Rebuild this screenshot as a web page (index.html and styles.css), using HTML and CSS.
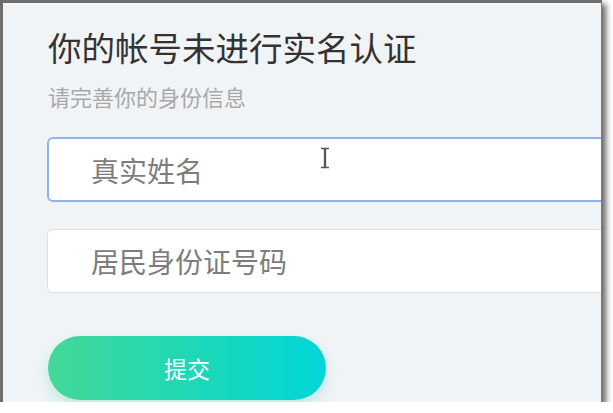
FILE: index.html
```html
<!DOCTYPE html>
<html lang="zh-CN">
<head>
<meta charset="utf-8">
<title>实名认证</title>
<link rel="stylesheet" href="styles.css">
</head>
<body>
<div class="window">
  <div class="panel">
    <h1 class="title">你的帐号未进行实名认证</h1>
    <p class="subtitle">请完善你的身份信息</p>
    <form class="form">
      <input class="field field-focus" type="text" placeholder="真实姓名">
      <input class="field" type="text" placeholder="居民身份证号码">
      <button class="submit" type="button">提交</button>
    </form>
  </div>
  <svg class="ibeam" width="10" height="22" viewBox="0 0 10 22">
    <path d="M1 1.5h3.5v19H1M9 1.5H5.5v19H9" fill="none" stroke="#555" stroke-width="1.3"/>
  </svg>
</div>
</body>
</html>
```

FILE: styles.css
```css
html, body {
  margin: 0;
  padding: 0;
  background: #ffffff;
}

body {
  font-family: "Noto Sans CJK SC", "Noto Sans", sans-serif;
}

.window {
  position: relative;
  width: 598px;
  height: 399px;
  border-top: 3px solid #6e6e6e;
  border-left: 3px solid #6e6e6e;
  border-right: 1px solid #7a7a7a;
  background: #f1f4f6;
  overflow: hidden;
  box-shadow: 4px 4px 6px rgba(0, 0, 0, 0.6);
}

.panel {
  display: flex;
  flex-direction: column;
  padding: 24px 0 0 45px;
}

.title {
  margin: 0;
  font-size: 33.5px;
  line-height: 40px;
  font-weight: 400;
  color: #333333;
  white-space: nowrap;
}

.subtitle {
  margin: 14px 0 0 0;
  font-size: 22px;
  line-height: 30px;
  color: #a9a9a9;
  white-space: nowrap;
}

.form {
  display: flex;
  flex-direction: column;
  align-items: flex-start;
  margin-top: 26px;
}

.field {
  box-sizing: border-box;
  width: 620px;
  height: 65px;
  margin: 0 0 27px -1px;
  padding: 0 0 0 43px;
  border: 1px solid #dcdfe3;
  border-radius: 6px;
  background: #ffffff;
  font-family: "Noto Sans CJK SC", "Noto Sans", sans-serif;
  font-size: 28px;
  color: #333;
  outline: none;
}

.field::placeholder {
  color: #7d7d7d;
}

.field-focus {
  border: 2px solid #8fb3ee;
  padding-left: 42px;
}

.field + .field {
  height: 64px;
  margin-bottom: 43px;
}

.submit {
  width: 278px;
  height: 64px;
  border: none;
  border-radius: 32px;
  background: linear-gradient(90deg, #43d897 0%, #1fd8b6 50%, #00d6d8 100%);
  color: #ffffff;
  font-family: "Noto Sans CJK SC", "Noto Sans", sans-serif;
  font-size: 23px;
  box-shadow: 0 6px 14px rgba(60, 200, 160, 0.28);
  cursor: pointer;
}

.ibeam {
  position: absolute;
  left: 317px;
  top: 144px;
}
```
